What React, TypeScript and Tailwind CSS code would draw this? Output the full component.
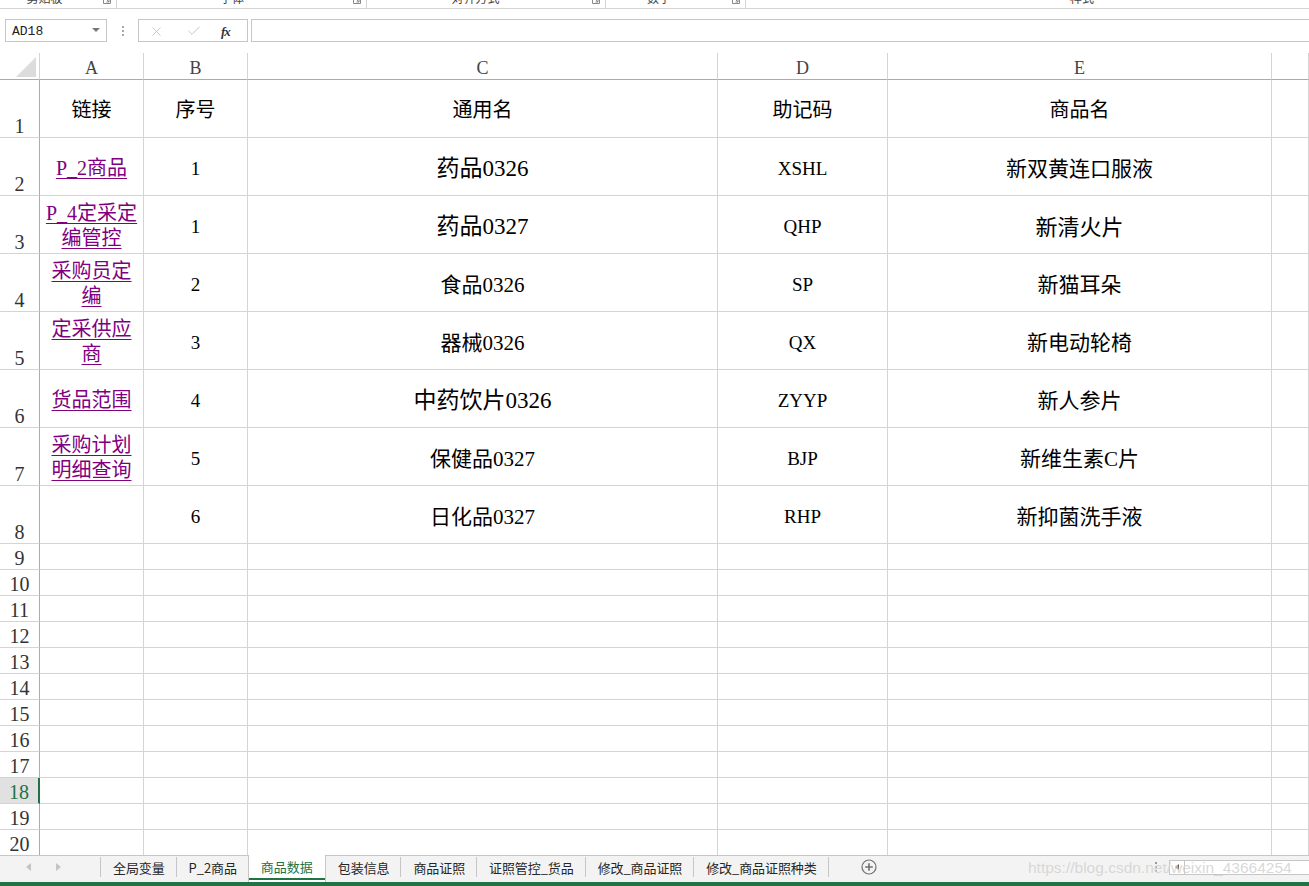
import { X, Check } from 'lucide-react'

const serif = "font-['Liberation_Serif','Noto_Sans_CJK_SC',serif]"
const sans = "font-['Noto_Sans_CJK_SC','Liberation_Sans',sans-serif]"

type Row = {
  link: string[]
  b: string
  c: string
  cBig?: boolean
  d: string
  e: string
  eBig?: boolean
}

const rows: Row[] = [
  { link: ['P_2商品'], b: '1', c: '药品0326', cBig: true, d: 'XSHL', e: '新双黄连口服液' },
  { link: ['P_4定采定', '编管控'], b: '1', c: '药品0327', cBig: true, d: 'QHP', e: '新清火片', eBig: true },
  { link: ['采购员定', '编'], b: '2', c: '食品0326', d: 'SP', e: '新猫耳朵' },
  { link: ['定采供应', '商'], b: '3', c: '器械0326', d: 'QX', e: '新电动轮椅' },
  { link: ['货品范围'], b: '4', c: '中药饮片0326', cBig: true, d: 'ZYYP', e: '新人参片' },
  { link: ['采购计划', '明细查询'], b: '5', c: '保健品0327', d: 'BJP', e: '新维生素C片' },
  { link: [], b: '6', c: '日化品0327', d: 'RHP', e: '新抑菌洗手液' },
]

const emptyRows = [9, 10, 11, 12, 13, 14, 15, 16, 17, 18, 19, 20]

const tabs = ['全局变量', 'P_2商品', '商品数据', '包装信息', '商品证照', '证照管控_货品', '修改_商品证照', '修改_商品证照种类']

function Launcher() {
  return (
    <svg width="8" height="8" viewBox="0 0 8 8" className="-mt-[4px]">
      <path d="M0.5 0.5h7v7h-7z" fill="none" stroke="#8a8a8a" />
      <path d="M3 3l3 3M6 3.5V6H3.5" fill="none" stroke="#8a8a8a" />
    </svg>
  )
}

function RibbonGroup({ label, width, offset = 0 }: { label: string; width: string; offset?: number }) {
  return (
    <div className={`${width} flex items-start border-r border-[#d5d5d5] pr-[5px]`}>
      <div className="flex-1 text-center -mt-[8px] text-[12px] leading-[12px] text-[#444]" style={{ paddingRight: offset }}>
        {label}
      </div>
      <Launcher />
    </div>
  )
}

function Cell({ children, className = '' }: { children?: React.ReactNode; className?: string }) {
  return (
    <div className={`border-r border-b border-[#d4d4d4] flex items-center justify-center text-black ${serif} ${className}`}>
      {children}
    </div>
  )
}

function RowHead({ n, tall, active }: { n: number; tall?: boolean; active?: boolean }) {
  return (
    <div
      className={`${tall ? 'h-[58px]' : 'h-[26px]'} border-b border-[#d4d4d4] flex items-end justify-center pb-[1px] text-[20px] leading-none ${serif} ${
        active ? 'bg-[#e1e1e1] text-[#217346] border-r-2 border-r-[#217346]' : 'text-[#333] border-r border-r-[#ababab]'
      }`}
    >
      {n}
    </div>
  )
}

export default function App() {
  return (
    <div className="w-[1309px] h-[886px] overflow-hidden bg-white relative flex flex-col">
      {/* ribbon bottom edge */}
      <div className={`h-[9px] overflow-hidden flex border-b border-[#d5d5d5] ${sans}`}>
        <RibbonGroup label="剪贴板" width="w-[117px]" offset={14} />
        <RibbonGroup label="字体" width="w-[250px]" offset={6} />
        <RibbonGroup label="对齐方式" width="w-[239px]" offset={8} />
        <RibbonGroup label="数字" width="w-[140px]" offset={20} />
        <div className="flex-1 text-[12px] leading-[12px] -mt-[8px] text-[#444] pl-[324px]">样式</div>
      </div>

      {/* formula bar */}
      <div className="mt-[10px] h-[23px] flex items-stretch">
        <div className="ml-[5px] w-[102px] border border-[#c6c6c6] flex items-center pl-[6px] pr-[6px] pt-[3px]">
          <span className="flex-1 font-['Liberation_Mono',monospace] text-[13px] text-[#222]">AD18</span>
          <svg width="8" height="5" viewBox="0 0 8 5" className="-mt-[3px]">
            <path d="M0 0h8L4 4z" fill="#777" />
          </svg>
        </div>
        <div className="w-[31px] flex flex-col items-center justify-center gap-[2px] pt-[2px]">
          <span className="w-[2px] h-[2px] bg-[#a8a8a8]" />
          <span className="w-[2px] h-[2px] bg-[#a8a8a8]" />
          <span className="w-[2px] h-[2px] bg-[#a8a8a8]" />
        </div>
        <div className="w-[110px] border border-[#c6c6c6] flex items-center pt-[2px]">
          <X size={15} strokeWidth={1.3} color="#bdbdbd" className="ml-[10px]" />
          <Check size={16} strokeWidth={1.3} color="#bdbdbd" className="ml-[22px]" />
          <span className="ml-[19px] font-['Liberation_Serif',serif] italic text-[13px] text-[#333] font-bold tracking-[-1px]">fx</span>
        </div>
        <div className="ml-[3px] flex-1 border border-r-0 border-[#c6c6c6]" />
      </div>

      {/* sheet */}
      <div className="mt-[11px] grid grid-cols-[40px_104px_104px_470px_170px_384px_1fr] grid-rows-[27px]">
        {/* column headers */}
        <div className="h-[27px] border-r border-[#d4d4d4] border-b border-b-[#ababab] flex items-end justify-end pr-[3px] pb-[2px]">
          <svg width="20" height="20" viewBox="0 0 20 20">
            <path d="M20 0V20H0z" fill="#dcdcdc" />
          </svg>
        </div>
        {['A', 'B', 'C', 'D', 'E', ''].map((l, i) => (
          <div
            key={i}
            className={`h-[27px] border-r border-[#d4d4d4] border-b border-b-[#ababab] flex items-center justify-center pt-[6px] text-[18px] text-[#444] ${serif}`}
          >
            {l}
          </div>
        ))}

        {/* row 1 */}
        <RowHead n={1} tall />
        <Cell className="text-[20px] pt-[4px]">链接</Cell>
        <Cell className="text-[20px] pt-[4px]">序号</Cell>
        <Cell className="text-[20px] pt-[4px]">通用名</Cell>
        <Cell className="text-[20px] pt-[4px]">助记码</Cell>
        <Cell className="text-[20px] pt-[4px]">商品名</Cell>
        <Cell />

        {rows.map((r, i) => (
          <div key={i} className="contents">
            <RowHead n={i + 2} tall />
            <Cell className="pt-[4px]">
              <a className="text-center text-[20px] leading-[25px] text-[#800080] underline decoration-1 underline-offset-[3px]">
                {r.link.map((t, j) => (
                  <span key={j}>
                    {j > 0 && <br />}
                    {t}
                  </span>
                ))}
              </a>
            </Cell>
            <Cell className="text-[19px] pt-[6px]">{r.b}</Cell>
            <Cell className={`${r.cBig ? 'text-[23px]' : 'text-[21px]'} pt-[6px]`}>{r.c}</Cell>
            <Cell className="text-[19px] pt-[6px]">{r.d}</Cell>
            <Cell className={`${r.eBig ? 'text-[22px]' : 'text-[21px]'} pt-[6px]`}>{r.e}</Cell>
            <Cell />
          </div>
        ))}

        {emptyRows.map((n) => (
          <div key={n} className="contents">
            <RowHead n={n} active={n === 18} />
            <Cell />
            <Cell />
            <Cell />
            <Cell />
            <Cell />
            <Cell />
          </div>
        ))}
      </div>

      {/* sheet tabs */}
      <div className={`-mt-[1px] h-[28px] border-t border-[#c6c6c6] bg-[#f3f3f3] flex items-stretch relative ${sans}`}>
        <div className="w-[100px] flex items-center pb-[3px]">
          <svg width="6" height="8" viewBox="0 0 6 8" className="ml-[26px]">
            <path d="M5 0v8L0 4z" fill="#c4c4c4" />
          </svg>
          <svg width="6" height="8" viewBox="0 0 6 8" className="ml-[24px]">
            <path d="M0 0v8l5-4z" fill="#c4c4c4" />
          </svg>
        </div>
        {tabs.map((t, i) =>
          t === '商品数据' ? (
            <div key={i} className="relative -mt-[1px] bg-white border-x border-[#c6c6c6] px-[12px] pb-[4px] flex items-center text-[13px] text-[#217346]">
              {t}
              <span className="absolute left-0 right-0 bottom-[2px] h-[2px] bg-[#217346]" />
            </div>
          ) : (
            <div key={i} className="flex items-center pb-[3px]">
              {tabs[i - 1] !== '商品数据' && <span className="w-px h-[20px] bg-[#c6c6c6]" />}
              <span className="pl-[12px] pr-[11px] text-[13px] text-[#262626] tracking-[-0.1px]">{t}</span>
            </div>
          )
        )}
        <div className="flex items-center pb-[3px]">
          <span className="w-px h-[20px] bg-[#c6c6c6]" />
        </div>
        <div className="ml-[32px] flex items-center pb-[3px]">
          <svg width="16" height="16" viewBox="0 0 16 16">
            <circle cx="8" cy="8" r="7" fill="none" stroke="#707070" strokeWidth="1.2" />
            <path d="M8 4.2v7.6M4.2 8h7.6" stroke="#707070" strokeWidth="1.6" />
          </svg>
        </div>
        <div className="ml-auto flex items-center gap-[12px] pb-[3px]">
          <div className="flex flex-col gap-[2px]">
            <span className="w-[2px] h-[2px] bg-[#9a9a9a]" />
            <span className="w-[2px] h-[2px] bg-[#9a9a9a]" />
            <span className="w-[2px] h-[2px] bg-[#9a9a9a]" />
          </div>
          <div className="w-[140px] h-[15px] border border-r-0 border-[#c6c6c6] bg-white flex">
            <div className="w-[15px] border-r border-[#c6c6c6] flex items-center justify-center">
              <svg width="4" height="6" viewBox="0 0 4 6">
                <path d="M4 0v6L0 3z" fill="#606060" />
              </svg>
            </div>
          </div>
        </div>
        <span className="absolute left-[1028px] top-[0px] font-['Liberation_Sans',sans-serif] text-[15.5px] text-[#d4d4d4]/90 whitespace-nowrap">
          https://blog.csdn.net/weixin_43664254
        </span>
      </div>
      <div className="h-[4px] bg-[#217346]" />
    </div>
  )
}
